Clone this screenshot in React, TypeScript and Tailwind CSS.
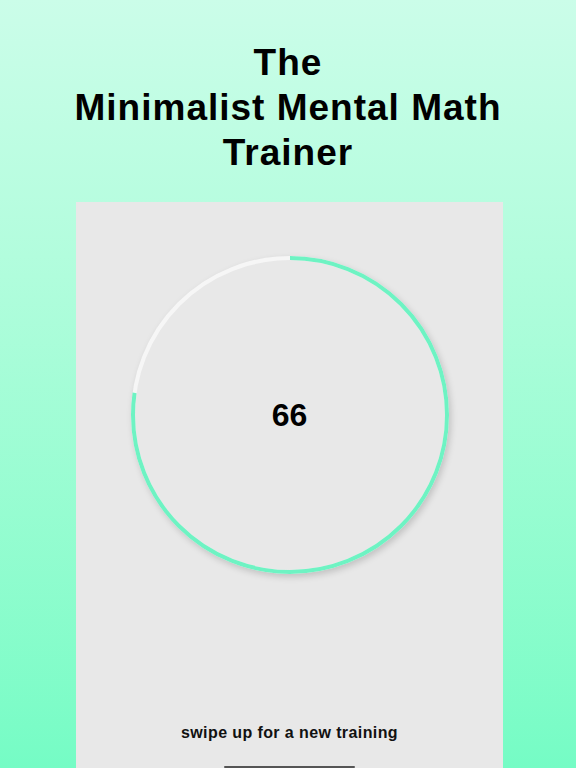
import React from "react";

const RADIUS = 157;
const CIRC = 2 * Math.PI * RADIUS;
const PROGRESS = 278 / 360;

const Ring = ({ value }: { value: number }) => {
    return (
        <div className="relative h-[330px] w-[330px]">
            <svg
                width={330}
                height={330}
                viewBox="0 0 330 330"
                className="drop-shadow-[2px_3px_3px_rgba(0,0,0,0.16)]"
            >
                <circle cx={165} cy={165} r={RADIUS} fill="#e8e8e8" stroke="#f6f6f6" strokeWidth={4} />
                <circle
                    cx={165}
                    cy={165}
                    r={RADIUS}
                    fill="none"
                    stroke="#6ef3c3"
                    strokeWidth={4}
                    strokeDasharray={`${CIRC * PROGRESS} ${CIRC}`}
                    transform="rotate(-90 165 165)"
                />
            </svg>
            <div className="absolute inset-0 flex items-center justify-center">
                <span className="text-[32px] font-bold text-black">{value}</span>
            </div>
        </div>
    );
};

export default function App() {
    return (
        <div
            className="flex h-[768px] flex-col overflow-hidden bg-gradient-to-b from-[#cbfde9] to-[#75fcc5]"
            style={{ fontFamily: '"Liberation Sans", Arial, sans-serif' }}
        >
            {/* title */}
            <h1 className="pt-[40px] text-center text-[37px] font-bold leading-[45px] tracking-[1px] text-black">
                The
                <br />
                Minimalist Mental Math
                <br />
                Trainer
            </h1>

            {/* card */}
            <div className="ml-[76px] mt-[27px] flex w-[427px] flex-1 flex-col items-center bg-[#e8e8e8] pt-[48px]">
                <Ring value={66} />
                <p className="mt-auto text-[16px] font-bold leading-6 tracking-[0.4px] text-[#111]">
                    swipe up for a new training
                </p>
                <div className="mt-[21px] h-[2px] w-[131px] rounded-full bg-[#555]" />
            </div>
        </div>
    );
}
